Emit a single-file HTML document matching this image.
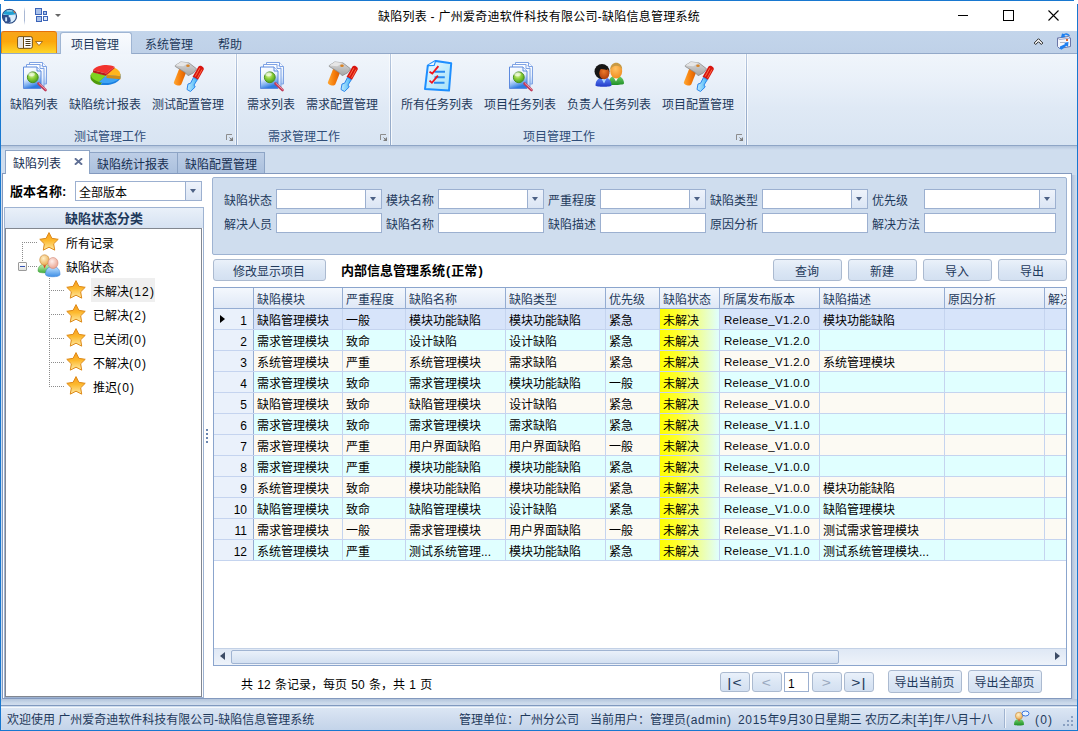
<!DOCTYPE html>
<html lang="zh-CN"><head><meta charset="utf-8"><title>缺陷列表 - 广州爱奇迪软件科技有限公司-缺陷信息管理系统</title>
<style>
*{box-sizing:border-box;margin:0;padding:0}
html,body{width:1078px;height:731px;overflow:hidden}
body{position:relative;background:#cfddee;font:12px/14px "Liberation Sans","Noto Sans CJK SC",sans-serif;color:#172f52;-webkit-font-smoothing:antialiased}
.a{position:absolute}
.t{position:absolute;white-space:nowrap;height:14px;line-height:14px}
/* window frame */
#frame{position:absolute;left:0;top:0;width:1078px;height:731px;border:1px solid #1878d0;pointer-events:none;z-index:50}
#title{position:absolute;left:1px;top:1px;width:1076px;height:30px;background:#fff}
#title .cap{position:absolute;left:0;width:1076px;top:9px;letter-spacing:.25px;text-align:center;color:#000;height:14px;line-height:14px}
/* ribbon */
#tabrow{position:absolute;left:1px;top:31px;width:1076px;height:22px;z-index:2;background:linear-gradient(#c3d5eb,#bfd1e8)}
#appbtn{position:absolute;left:0;top:0;width:56px;height:22px;border:1px solid #e8860f;border-bottom:none;border-top-color:#e4700a;border-radius:3px 3px 0 0;background:linear-gradient(#f7a51b 0%,#fba70c 45%,#fcc41f 80%,#fdd62b 100%)}
.rtab{position:absolute;top:7px;height:14px;line-height:14px;color:#1e395b;white-space:nowrap}
#rtab1{position:absolute;left:59px;top:1px;width:72px;height:22px;border:1px solid #9fb5d3;border-bottom:none;border-radius:3px 3px 0 0;background:linear-gradient(#f9fbfe,#eff4fb)}
#ribbon{position:absolute;left:1px;top:53px;width:1076px;height:93px;background:linear-gradient(#f0f5fb 0%,#e9f0f9 30%,#dfe9f5 60%,#d8e4f2 100%);border-bottom:1px solid #8ea5c6;border-top:1px solid #93a9c9}
.gsep{position:absolute;top:3px;width:1px;height:91px;background:linear-gradient(#b9c9e0,#9db1ce 40%,#93a9c8)}
.gsep:after{content:"";position:absolute;left:1px;top:0;width:1px;height:91px;background:rgba(255,255,255,.75)}.gsep:before{content:"";position:absolute;left:-1px;top:0;width:1px;height:91px;background:rgba(255,255,255,.55)}
.rb{position:absolute;top:98px;height:14px;line-height:14px;white-space:nowrap;color:#1e395b}
.gcap{position:absolute;top:130px;height:14px;line-height:14px;white-space:nowrap;color:#2f4d78}
.launch{position:absolute;top:134px;width:7px;height:7px}
/* doc tabs */
.dtab{position:absolute;top:152px;height:21px;border:1px solid #8da4c5;border-bottom:none;background:linear-gradient(#bdcee6,#abc0dd);color:#172f52}
.dtab span{position:absolute;top:5px;left:7px;white-space:nowrap;height:14px;line-height:14px}
#dtab1{top:150px;height:24px;background:#fff;z-index:3}
#dtab1 span{top:6px}
#page{position:absolute;left:2px;top:173px;width:1070px;height:526px;background:#fff;border:1px solid #8399be}
/* inputs */
.inp{position:absolute;height:20px;background:#fff;border:1px solid #9cb0d0}
.cbtn{position:absolute;right:0px;top:0px;width:16px;height:18px;border-left:1px solid #9cb0d0;background:linear-gradient(#eef3fb,#dbe5f4)}
.cbtn:after{content:"";position:absolute;left:4px;top:7px;border:3.5px solid transparent;border-top:4px solid #4d6185;border-bottom:none}
.lbl{position:absolute;height:14px;line-height:14px;white-space:nowrap;color:#1e395b}
.btn{position:absolute;text-indent:-1px;border:1px solid #abbad0;border-radius:3px;background:linear-gradient(#eaf1fa 0%,#dce7f5 50%,#d3e0f1 100%);color:#1e395b;text-align:center;white-space:nowrap}
/* grid */
#grid{position:absolute;left:213px;top:287px;width:854px;height:379px;border:1px solid #8ba5cd;background:#fff}
.gh{position:absolute;height:21px;background:linear-gradient(#f4f8fd,#dfe8f6);border-bottom:1px solid #94acd2}
.ghc{position:absolute;top:288px;height:20px;border-right:1px solid #94acd2;color:#1e395b;overflow:hidden}
.ghc span{position:absolute;left:3px;top:5px;height:14px;line-height:14px;white-space:nowrap}
.gr{position:absolute;left:214px;width:852px;height:21px;border-bottom:1px solid #c5d4ef;color:#000;overflow:hidden}
.gr.sel{background:#d7e4fa}
.gr.ev{background:#e0ffff}
.gr.od{background:#fcfaf3}
.gr .ind{position:absolute;left:0;top:0;width:40px;height:21px;background:#eaf1fb;border-right:1px solid #94acd2;border-bottom:1px solid #94acd2;color:#000}
.gr .ind span{position:absolute;right:6px;top:5px;height:14px;line-height:14px}
.gr .ind i{position:absolute;left:6px;top:6px;border:4px solid transparent;border-left:5px solid #000;border-right:none}
.gr .c{position:absolute;top:0;height:20px;border-right:1px solid #c5d4ef;padding:5px 0 0 3px;line-height:14px;white-space:nowrap;overflow:hidden}
.gr .c.st{background:linear-gradient(90deg,#ffff00 0%,#ffff30 30%,#e0ffff 100%)}
/* status bar */
#status{position:absolute;left:1px;top:705px;width:1076px;height:25px;background:linear-gradient(#f4f8fc 0,#f4f8fc 1px,#dbe6f4 1px,#cfdcee 50%,#c2d3e9 100%) 0 1px/100% 24px no-repeat;border-top:1px solid #8099bf;border-radius:0 0 4px 4px}
#pshadow{position:absolute;left:1px;top:699px;width:1076px;height:6px;background:linear-gradient(#b3c4db,#c9d8ea 60%,#d1deee)}
#status .t{top:7px;color:#1e395b}
#rshadow{position:absolute;left:1px;top:146px;width:1076px;height:4px;background:linear-gradient(#b4c5dc,#cfddee)}
#grp{position:absolute;left:4px;top:207px;width:200px;height:491px;border:1px solid #9eb3d2;background:#fff}
#grph{position:absolute;left:0;top:0;width:198px;height:20px;background:linear-gradient(#e9f0f9,#d6e2f2);text-align:center;font-weight:bold;color:#1e395b;line-height:14px;padding-top:4px;font-size:13px}
#tree{position:absolute;left:0px;top:20px;width:197px;height:469px;border:1px solid #828790;background:#fff}
.dot{position:absolute;left:206px;width:2px;height:2px;background:#6b87b0}
#filter{position:absolute;left:212px;top:177px;width:855px;height:78px;border:1px solid #9eb3d2;border-radius:2px;background:#cfddee}
.dtab .x{position:absolute;left:68px;top:5px;font-size:11px;line-height:14px;color:#44546a;font-weight:bold}
#hscroll{position:absolute;left:214px;top:648px;width:852px;height:17px;background:linear-gradient(#dfe8f5,#eef3fa);border-top:1px solid #c3d1e6}
#hthumb{position:absolute;left:17px;top:1px;width:608px;height:14px;border:1px solid #a0b4d2;border-radius:2px;background:linear-gradient(#eaf1fa,#d3e0f1)}
#hscroll i{position:absolute;top:3px;border:4.5px solid transparent}
#hscroll i.al{left:6px;border-right:5px solid #3c4c66;border-left:none}
#hscroll i.ar{right:6px;border-left:5px solid #3c4c66;border-right:none}
.btn.pg{font-size:12px;letter-spacing:1px;text-indent:0;transform:none}.btn.pg span{display:inline-block;transform:scale(1.3,1);position:relative;top:-1px}
.btn.dis{color:#9aa9c0}
.dh{position:absolute;height:1px;background:repeating-linear-gradient(90deg,#8c8c8c 0 1px,transparent 1px 2px)}
.dv{position:absolute;width:1px;background:repeating-linear-gradient(180deg,#8c8c8c 0 1px,transparent 1px 2px)}
.exp{position:absolute;left:18px;top:262px;width:9px;height:9px;border:1px solid #9a9a9a;border-radius:1px;background:linear-gradient(#fff,#e4e4e4)}
.exp i{position:absolute;left:1px;top:3px;width:5px;height:1px;background:#3553b0}
b{font-size:13px;font-weight:bold}
.l{letter-spacing:.7px}
.l2{letter-spacing:1.2px}
.pr{font-style:normal;margin:0 1px}
.cw{position:absolute;background:#fff;z-index:60}
#rsh{position:absolute;left:1072px;top:175px;width:5px;height:526px;background:linear-gradient(90deg,#b1c2da,#c6d5e8 60%,#cfddee)}
.rel{position:relative;top:-1px;left:1px;font-size:11.500px;letter-spacing:.3px}

</style></head><body>
<div id="title">
  <div class="cap">缺陷列表 - 广州爱奇迪软件科技有限公司-缺陷信息管理系统</div>
  <svg class="a" style="left:1px;top:7px" width="17" height="17" viewBox="0 0 17 17"><ellipse cx="7.500" cy="8.300" rx="7" ry="6.900" fill="#c6e3fb" stroke="#2b4a80" stroke-width="1.200"/><path d="M1.300 6.300C2 .6 13 .6 13.700 6.300 10 7.400 5 7.400 1.300 6.300z" fill="#1f9fd2"/><ellipse cx="7.500" cy="2.900" rx="3.200" ry=".7" fill="#fff" opacity=".65"/><path d="M.9 7h5.800v2.300h2v4.200l-2.800 1.700H3.200L.9 11.500z" fill="#2f4f8c"/><rect x="3.200" y="9.300" width="1.900" height="4" fill="#cfe8fc"/><path d="M7 7.500h6.500c-.3 3-1.500 5.500-4 6.800z" fill="#e4f2fe" opacity=".7"/><path d="M11 3l2.200 .7-.4 1.700z" fill="#f0641e"/></svg>
<div class="a" style="left:23px;top:6px;width:1px;height:18px;background:linear-gradient(rgba(160,176,208,0),#a9b8d4 25%,#a9b8d4 75%,rgba(160,176,208,0))"></div>
<svg class="a" style="left:34px;top:7px" width="14" height="15" viewBox="0 0 14 15"><rect x=".5" y=".5" width="6" height="6" fill="#a9c1ea" stroke="#3b64b8"/><rect x="8.500" y="3.500" width="3" height="3" fill="#a9c1ea" stroke="#3b64b8"/><rect x="1.500" y="8.500" width="5" height="5" fill="#a9c1ea" stroke="#3b64b8"/><rect x="8.500" y="8.500" width="4" height="4" fill="#dfe9fa" stroke="#3b64b8"/></svg>
<svg class="a" style="left:54px;top:13px" width="6" height="3" viewBox="0 0 6 3"><path d="M0 0h6L3 3z" fill="#666"/></svg>
<svg class="a" style="left:956px;top:9px" width="12" height="12" viewBox="0 0 12 12"><path d="M1 5.500h10" stroke="#000" stroke-width="1"/></svg>
<svg class="a" style="left:1002px;top:9px" width="12" height="12" viewBox="0 0 12 12"><rect x=".5" y=".5" width="10" height="10" fill="none" stroke="#000" stroke-width="1"/></svg>
<svg class="a" style="left:1047px;top:9px" width="12" height="12" viewBox="0 0 12 12"><path d="M.5 .5l10 10M10.500 .5l-10 10" stroke="#000" stroke-width="1.100"/></svg>
</div>
<div id="tabrow">
  <div id="appbtn"><svg class="a" style="left:15px;top:4px" width="28" height="14" viewBox="0 0 28 14"><rect x=".7" y=".7" width="14.600" height="11.600" rx="1.500" fill="#fff" stroke="#6b4a12" stroke-width="1"/><path d="M6.500 1v11" stroke="#6b4a12" stroke-width="1"/><rect x="1.500" y="1.500" width="4.500" height="10" fill="#e4e4e4"/><path d="M8.500 3.500h5M8.500 5.500h5M8.500 7.500h5M8.500 9.500h5" stroke="#4a3a1a" stroke-width="1"/><path d="M18.500 5.500h7l-3.500 4z" fill="#fff" stroke="#8a5a10" stroke-width=".8"/></svg></div>
  <div id="rtab1"></div>
  <div class="rtab" style="left:70px">项目管理</div>
  <div class="rtab" style="left:144px">系统管理</div>
  <div class="rtab" style="left:217px">帮助</div>
  <svg class="a" style="left:1032px;top:6px" width="11" height="9" viewBox="0 0 11 9"><path d="M1.200 6l4.300-4.300L9.800 6 8.300 7.500 5.500 4.700 2.700 7.500z" fill="#fff" stroke="#222" stroke-width="1" stroke-linejoin="round"/></svg>
<svg class="a" style="left:1055px;top:2px" width="16" height="17" viewBox="0 0 16 17"><path d="M1.500 5l11-1.500 2 1.500v8.500l-11 2-2-2z" fill="#f4f6fb" stroke="#6a76a8" stroke-width="1"/><path d="M1.500 5l2 1.500 11-1.500" fill="none" stroke="#8a94c0" stroke-width=".8"/><rect x="10" y="6" width="2" height="2" fill="#e0642a"/><path d="M8 1c2-1.500 5-.5 6 2l-2-.3c-1-1-2.500-1.200-3.500-.5l1 1.800-4.500.5 1-4z" fill="#1e7ff0"/><path d="M4 13.500l-.5 2 2 1.200 5-4 1.500 1 .5-4.700-4.500.7 1.200 1.300z" fill="#1e7ff0"/><path d="M4 9.500h5" stroke="#b0b4c4" stroke-width="1"/></svg>
</div>
<div id="ribbon"></div>
<div class="gsep" style="left:236px;top:54px"></div>
<div class="gsep" style="left:390px;top:54px"></div>
<div class="gsep" style="left:746px;top:54px"></div>
<svg width="0" height="0" style="position:absolute"><defs>
<linearGradient id="pg" x1="0" y1="0" x2="0" y2="1"><stop offset="0" stop-color="#ffffff"/><stop offset=".6" stop-color="#e6f0fd"/><stop offset="1" stop-color="#a9c9f5"/></linearGradient>
<linearGradient id="pgf" x1="0" y1="0" x2="0.3" y2="1"><stop offset="0" stop-color="#ffffff"/><stop offset=".55" stop-color="#e6f0fd"/><stop offset=".82" stop-color="#7fb0f0"/><stop offset="1" stop-color="#2f7be0"/></linearGradient>
<radialGradient id="lens" cx=".4" cy=".3" r=".75"><stop offset="0" stop-color="#e4f7b4"/><stop offset=".45" stop-color="#8fd13c"/><stop offset="1" stop-color="#3f9a16"/></radialGradient>
<linearGradient id="hnd" x1="0" y1="0" x2="1" y2="0"><stop offset="0" stop-color="#ffa733"/><stop offset=".5" stop-color="#f57c0a"/><stop offset="1" stop-color="#d95a00"/></linearGradient>
<linearGradient id="hmr" x1="0" y1="0" x2="0" y2="1"><stop offset="0" stop-color="#d9d9d9"/><stop offset="1" stop-color="#a4a4a4"/></linearGradient>
<linearGradient id="shaft" x1="0" y1="0" x2="1" y2="0"><stop offset="0" stop-color="#bfeaff"/><stop offset="1" stop-color="#45b4f5"/></linearGradient>
<linearGradient id="star" x1="0" y1="0" x2="0" y2="1"><stop offset="0" stop-color="#f79a1c"/><stop offset=".45" stop-color="#fdb92e"/><stop offset="1" stop-color="#feeaa6"/></linearGradient>
<linearGradient id="chk" x1="0" y1="0" x2="1" y2="1"><stop offset="0" stop-color="#f4fcff"/><stop offset=".5" stop-color="#c4ecfc"/><stop offset="1" stop-color="#a5e0f8"/></linearGradient>
<radialGradient id="faceA" cx=".45" cy=".35" r=".7"><stop offset="0" stop-color="#ee7a2a"/><stop offset="1" stop-color="#a9380a"/></radialGradient>
<radialGradient id="faceB" cx=".45" cy=".35" r=".7"><stop offset="0" stop-color="#ffc364"/><stop offset="1" stop-color="#f08a1c"/></radialGradient>
<linearGradient id="bodyA" x1="0" y1="0" x2="0" y2="1"><stop offset="0" stop-color="#5f86f5"/><stop offset="1" stop-color="#2139c8"/></linearGradient>
<linearGradient id="bodyB" x1="0" y1="0" x2="0" y2="1"><stop offset="0" stop-color="#6fd06a"/><stop offset="1" stop-color="#1f8f25"/></linearGradient>
<linearGradient id="bodyG" x1="0" y1="0" x2="0" y2="1"><stop offset="0" stop-color="#c9f0b8"/><stop offset="1" stop-color="#3fae3a"/></linearGradient>
<radialGradient id="faceC" cx=".4" cy=".35" r=".7"><stop offset="0" stop-color="#fff0c8"/><stop offset="1" stop-color="#e9a84c"/></radialGradient>
<radialGradient id="faceD" cx=".4" cy=".35" r=".7"><stop offset="0" stop-color="#fff0ec"/><stop offset="1" stop-color="#e9a08c"/></radialGradient>
<linearGradient id="bodyD" x1="0" y1="0" x2="0" y2="1"><stop offset="0" stop-color="#bfe2ff"/><stop offset="1" stop-color="#3d8ee6"/></linearGradient>
</defs></svg><svg class="a" style="left:18px;top:60px" width="32" height="32" viewBox="0 0 32 32"><path d="M11.500 2.500h13l4 4v17.500h-17z" fill="url(#pg)" stroke="#7fa3e4" stroke-width="1"/> <path d="M24.500 2.500v4h4" fill="#f4f8ff" stroke="#7fa3e4" stroke-width="1"/> <path d="M8.500 4.500h13.500l4 4v18.500h-17.500z" fill="url(#pg)" stroke="#7fa3e4" stroke-width="1"/> <path d="M22 4.500v4h4" fill="#f4f8ff" stroke="#7fa3e4" stroke-width="1"/> <path d="M5.500 7h13.500l4 4v17.500h-17.500z" fill="url(#pgf)" stroke="#5d8ade" stroke-width="1"/> <path d="M19 7v4h4" fill="#eef5ff" stroke="#5d8ade" stroke-width="1"/> <path d="M20.500 23.500l7 6.500" stroke="#c03a58" stroke-width="2.600" stroke-linecap="round"/> <path d="M21 23.300l6.500 6" stroke="#ef9aa8" stroke-width="1" stroke-linecap="round"/> <circle cx="14.800" cy="17.300" r="5.400" fill="url(#lens)" stroke="#4a8f22" stroke-width="1"/> <ellipse cx="13.500" cy="14.300" rx="3.200" ry="2" fill="#fff" opacity=".55"/></svg><svg class="a" style="left:89px;top:60px" width="32" height="32" viewBox="0 0 32 32"><g transform="translate(.5 1.900) scale(1 .89)"> <path d="M1 14.500v3.500c0 3 5 7.500 10 8l6-9z" fill="#4f9a0c"/> <path d="M31 13.500v4.500c-1 4-8 8-15 8h-5l6-9z" fill="#1b7fe0"/> <path d="M17 15L3 11.500C0 14 1 19 9.500 22.500z" fill="#7ed321"/> <path d="M17 15L9.500 22.500c5 2 13 1.500 18-2 2.500-1.800 3.500-3.500 3.500-5.500z" fill="#3fa4f4"/> <path d="M17 14.500l14 1.500c.5-4-2-7.500-6-9.500z" fill="#ffb51e"/> <path d="M25 6.500l-8 8 14 1.500v3" fill="none"/> <path d="M16.500 13L3.500 9.500C5 5.500 12 3.500 17 3.500c3 0 6 .8 8 2z" fill="#f2332e"/> <path d="M3.500 9.500l13 3.500v2.500L3.500 12z" fill="#b81c1c"/> <path d="M16.500 13l8.500-7.500v1.500l-8.500 8.500z" fill="#d62222"/> <path d="M31 16v3.500l-14-1.500v-3.500z" fill="#e08a00" opacity=".9"/></g></svg><svg class="a" style="left:173px;top:60px" width="32" height="32" viewBox="0 0 32 32"><path d="M6.500 8l7.200 3-5.300 13.300c-1.200 2.700-8.300.8-7.500-2z" fill="url(#hnd)"/> <path d="M2.300 5.500L7.800 2l8 .8 7.800 6-2.800 3.900-5.600 3-3.400-3.500-9.500-5.700z" fill="url(#hmr)" stroke="#8c8c8c" stroke-width=".8"/> <path d="M2.300 5.500L7.800 2l8 .8-5.500 3.500z" fill="#e6e6e6"/> <ellipse cx="15" cy="5.800" rx="1.800" ry="1.200" fill="#d98324"/> <path d="M25.500 6.500c1.500-2 6 .5 5.200 3L24.800 20l-5.300-3z" fill="#d8140f"/> <path d="M26.800 8.200l-4.600 8.300M29 9.500l-4.500 8.300" stroke="#ff7a4a" stroke-width=".9"/> <path d="M20.500 17.500l3.800 2.200-3.300 5.300 1.200 2-4.700 4.500-3.500-2 1-5.500 2.500-.7z" fill="url(#shaft)" stroke="#2b86ea" stroke-width="1"/></svg><svg class="a" style="left:255px;top:60px" width="32" height="32" viewBox="0 0 32 32"><path d="M11.500 2.500h13l4 4v17.500h-17z" fill="url(#pg)" stroke="#7fa3e4" stroke-width="1"/> <path d="M24.500 2.500v4h4" fill="#f4f8ff" stroke="#7fa3e4" stroke-width="1"/> <path d="M8.500 4.500h13.500l4 4v18.500h-17.500z" fill="url(#pg)" stroke="#7fa3e4" stroke-width="1"/> <path d="M22 4.500v4h4" fill="#f4f8ff" stroke="#7fa3e4" stroke-width="1"/> <path d="M5.500 7h13.500l4 4v17.500h-17.500z" fill="url(#pgf)" stroke="#5d8ade" stroke-width="1"/> <path d="M19 7v4h4" fill="#eef5ff" stroke="#5d8ade" stroke-width="1"/> <path d="M20.500 23.500l7 6.500" stroke="#c03a58" stroke-width="2.600" stroke-linecap="round"/> <path d="M21 23.300l6.500 6" stroke="#ef9aa8" stroke-width="1" stroke-linecap="round"/> <circle cx="14.800" cy="17.300" r="5.400" fill="url(#lens)" stroke="#4a8f22" stroke-width="1"/> <ellipse cx="13.500" cy="14.300" rx="3.200" ry="2" fill="#fff" opacity=".55"/></svg><svg class="a" style="left:327px;top:60px" width="32" height="32" viewBox="0 0 32 32"><path d="M6.500 8l7.200 3-5.300 13.300c-1.200 2.700-8.300.8-7.500-2z" fill="url(#hnd)"/> <path d="M2.300 5.500L7.800 2l8 .8 7.800 6-2.800 3.900-5.600 3-3.400-3.500-9.500-5.700z" fill="url(#hmr)" stroke="#8c8c8c" stroke-width=".8"/> <path d="M2.300 5.500L7.800 2l8 .8-5.500 3.500z" fill="#e6e6e6"/> <ellipse cx="15" cy="5.800" rx="1.800" ry="1.200" fill="#d98324"/> <path d="M25.500 6.500c1.500-2 6 .5 5.200 3L24.800 20l-5.300-3z" fill="#d8140f"/> <path d="M26.800 8.200l-4.600 8.300M29 9.500l-4.500 8.300" stroke="#ff7a4a" stroke-width=".9"/> <path d="M20.500 17.500l3.800 2.200-3.300 5.300 1.200 2-4.700 4.500-3.500-2 1-5.500 2.500-.7z" fill="url(#shaft)" stroke="#2b86ea" stroke-width="1"/></svg><svg class="a" style="left:421px;top:60px" width="32" height="32" viewBox="0 0 32 32"><path d="M6.800 5.600L14.600 .9l15.600 2.400-2.200 27.300L4 29z" fill="url(#chk)" stroke="#1e8fff" stroke-width="2" stroke-linejoin="round"/> <path d="M6.800 5.600l6.400-.2 1.400-4.500" fill="#eefaff" stroke="#1e8fff" stroke-width="1.200" stroke-linejoin="round"/> <path d="M13.500 11.700h10.500M13.500 17.300h10.300M13 22.800h10.500" stroke="#2a8cf0" stroke-width="2"/> <path d="M8.500 11.700l2.800 1.900 6.100-7.500" fill="none" stroke="#f0141e" stroke-width="1.800"/> <path d="M8.500 20.600l2.400 2.200 6-7.200" fill="none" stroke="#f0141e" stroke-width="1.800"/></svg><svg class="a" style="left:504px;top:60px" width="32" height="32" viewBox="0 0 32 32"><path d="M11.500 2.500h13l4 4v17.500h-17z" fill="url(#pg)" stroke="#7fa3e4" stroke-width="1"/> <path d="M24.500 2.500v4h4" fill="#f4f8ff" stroke="#7fa3e4" stroke-width="1"/> <path d="M8.500 4.500h13.500l4 4v18.500h-17.500z" fill="url(#pg)" stroke="#7fa3e4" stroke-width="1"/> <path d="M22 4.500v4h4" fill="#f4f8ff" stroke="#7fa3e4" stroke-width="1"/> <path d="M5.500 7h13.500l4 4v17.500h-17.500z" fill="url(#pgf)" stroke="#5d8ade" stroke-width="1"/> <path d="M19 7v4h4" fill="#eef5ff" stroke="#5d8ade" stroke-width="1"/> <path d="M20.500 23.500l7 6.500" stroke="#c03a58" stroke-width="2.600" stroke-linecap="round"/> <path d="M21 23.300l6.500 6" stroke="#ef9aa8" stroke-width="1" stroke-linecap="round"/> <circle cx="14.800" cy="17.300" r="5.400" fill="url(#lens)" stroke="#4a8f22" stroke-width="1"/> <ellipse cx="13.500" cy="14.300" rx="3.200" ry="2" fill="#fff" opacity=".55"/></svg><svg class="a" style="left:593px;top:60px" width="32" height="32" viewBox="0 0 32 32"><path d="M15.500 24c0-4.500 2-7 5-8h5c3.500 1 5.500 4 5.500 7.500 0 1.600-15.500 2.200-15.500 .5z" fill="url(#bodyB)"/> <path d="M20.200 16.500l2.800 5 2.800-5z" fill="#fff"/> <ellipse cx="23.200" cy="11" rx="6" ry="7.400" fill="url(#faceB)"/> <path d="M17.200 10c0-5 3-7.200 6-7.200s6 2.200 6 6.700c-1.500-3-3.500-3.800-6-3.800s-4.500 1.300-6 4.300z" fill="#c89a44"/> <path d="M2.500 25.500c0-4.500 2.500-7 5.500-8h5c3.500 1 5.500 4 5.500 8 0 1.700-16 1.700-16 0z" fill="url(#bodyA)"/> <path d="M8.200 18l2.800 5.500 2.800-5.500z" fill="#a9d4ff"/> <circle cx="9" cy="11.500" r="7.500" fill="#161616"/> <ellipse cx="11.300" cy="13.300" rx="5" ry="6" fill="url(#faceA)"/> <path d="M6 9c2-3 6-4 9-2 .5 1.500-.5 3-1.500 3-2-1-5-.5-7.500-1z" fill="#161616"/></svg><svg class="a" style="left:683px;top:60px" width="32" height="32" viewBox="0 0 32 32"><path d="M6.500 8l7.200 3-5.300 13.300c-1.200 2.700-8.300.8-7.500-2z" fill="url(#hnd)"/> <path d="M2.300 5.500L7.800 2l8 .8 7.800 6-2.800 3.900-5.600 3-3.400-3.500-9.500-5.700z" fill="url(#hmr)" stroke="#8c8c8c" stroke-width=".8"/> <path d="M2.300 5.500L7.800 2l8 .8-5.500 3.500z" fill="#e6e6e6"/> <ellipse cx="15" cy="5.800" rx="1.800" ry="1.200" fill="#d98324"/> <path d="M25.500 6.500c1.500-2 6 .5 5.200 3L24.800 20l-5.300-3z" fill="#d8140f"/> <path d="M26.800 8.200l-4.600 8.300M29 9.500l-4.500 8.300" stroke="#ff7a4a" stroke-width=".9"/> <path d="M20.500 17.500l3.800 2.200-3.300 5.300 1.200 2-4.700 4.500-3.500-2 1-5.500 2.500-.7z" fill="url(#shaft)" stroke="#2b86ea" stroke-width="1"/></svg>
<div class="rb" style="left:10px">缺陷列表</div>
<div class="rb" style="left:69px">缺陷统计报表</div>
<div class="rb" style="left:152px">测试配置管理</div>
<div class="rb" style="left:247px">需求列表</div>
<div class="rb" style="left:306px">需求配置管理</div>
<div class="rb" style="left:401px">所有任务列表</div>
<div class="rb" style="left:484px">项目任务列表</div>
<div class="rb" style="left:567px">负责人任务列表</div>
<div class="rb" style="left:662px">项目配置管理</div>
<div class="gcap" style="left:74px">测试管理工作</div>
<div class="gcap" style="left:268px">需求管理工作</div>
<div class="gcap" style="left:523px">项目管理工作</div>
<svg class="a" style="left:226px;top:134px" width="8" height="8" viewBox="0 0 8 8"><path d="M.5 6V.5H6" fill="none" stroke="#8d8d8d" stroke-width="1"/><path d="M7 3v4H3z" fill="#7d7d7d"/><path d="M3.500 3.500l2 2" stroke="#7d7d7d" stroke-width="1"/></svg><svg class="a" style="left:380px;top:134px" width="8" height="8" viewBox="0 0 8 8"><path d="M.5 6V.5H6" fill="none" stroke="#8d8d8d" stroke-width="1"/><path d="M7 3v4H3z" fill="#7d7d7d"/><path d="M3.500 3.500l2 2" stroke="#7d7d7d" stroke-width="1"/></svg><svg class="a" style="left:736px;top:134px" width="8" height="8" viewBox="0 0 8 8"><path d="M.5 6V.5H6" fill="none" stroke="#8d8d8d" stroke-width="1"/><path d="M7 3v4H3z" fill="#7d7d7d"/><path d="M3.500 3.500l2 2" stroke="#7d7d7d" stroke-width="1"/></svg>
<div id="rshadow"></div>

<div id="page"></div>
<div class="dtab" id="dtab1" style="left:5px;width:85px"><span>缺陷列表</span><svg class="a" style="left:68px;top:7px" width="9" height="7" viewBox="0 0 9 7"><path d="M.9 .3l7.200 6.400M8.100 .3L.9 6.700" stroke="#5f6f94" stroke-width="1.900" fill="none"/></svg></div>
<div class="dtab" style="left:89px;width:89px"><span>缺陷统计报表</span></div>
<div class="dtab" style="left:177px;width:88px"><span>缺陷配置管理</span></div>

<!-- left panel -->
<div class="lbl" style="left:10px;top:185px;color:#000" id="vlab"><b>版本名称:</b></div>
<div class="inp" style="left:75px;top:181px;width:127px"><div class="lbl" style="left:3px;top:4px;color:#000">全部版本</div><div class="cbtn"></div></div>
<div id="grp"><div id="grph">缺陷状态分类</div><div id="tree"></div></div>
<div class="dv" style="left:22px;top:242px;height:20px"></div><div class="dh" style="left:22px;top:242px;width:16px"></div><div class="dh" style="left:28px;top:266px;width:9px"></div><div class="exp"><i></i></div><svg class="a" style="left:39px;top:232px" width="20" height="19" viewBox="0 0 20 19"><path d="M10.00 0.60 L12.88 6.34 L19.23 7.30 L14.66 11.81 L15.70 18.15 L10.00 15.20 L4.30 18.15 L5.34 11.81 L0.77 7.30 L7.12 6.34z" fill="url(#star)" stroke="#dd8a1a" stroke-width="1" stroke-linejoin="round"/></svg><div class="lbl" style="left:66px;top:237px;color:#000">所有记录</div><svg class="a" style="left:37px;top:254px" width="25" height="24" viewBox="0 0 25 24"><path d="M1 17c0-4 2-6 4.500-6.500h4c2.500.5 4.500 2.500 4.500 6.500 0 2.500-13 2.500-13 0z" fill="url(#bodyG)" stroke="#3f9a3a" stroke-width=".5"/><path d="M6 10.500l1.600 4 1.600-4z" fill="#e03a2a"/><ellipse cx="7.500" cy="6" rx="4.800" ry="5.200" fill="url(#faceC)" stroke="#c98a3a" stroke-width=".6"/><path d="M8.500 20.500c0-4.500 2-7 5-7.500h4.500c3 .5 5 3 5 7.500 0 3-14.500 3-14.500 0z" fill="url(#bodyD)" stroke="#3f86dc" stroke-width=".6"/><ellipse cx="16" cy="9" rx="5" ry="5.500" fill="url(#faceD)" stroke="#d48a78" stroke-width=".6"/></svg><div class="lbl" style="left:66px;top:261px;color:#000">缺陷状态</div><div class="dv" style="left:49px;top:278px;height:110px"></div><div class="a" style="left:91px;top:278px;width:64px;height:24px;background:#efefef"></div><div class="dh" style="left:49px;top:290px;width:16px"></div><svg class="a" style="left:66px;top:280px" width="20" height="19" viewBox="0 0 20 19"><path d="M10.00 0.60 L12.88 6.34 L19.23 7.30 L14.66 11.81 L15.70 18.15 L10.00 15.20 L4.30 18.15 L5.34 11.81 L0.77 7.30 L7.12 6.34z" fill="url(#star)" stroke="#dd8a1a" stroke-width="1" stroke-linejoin="round"/></svg><div class="lbl" style="left:93px;top:285px;color:#000">未解决<span class="l2">(12)</span></div><div class="dh" style="left:49px;top:314px;width:16px"></div><svg class="a" style="left:66px;top:304px" width="20" height="19" viewBox="0 0 20 19"><path d="M10.00 0.60 L12.88 6.34 L19.23 7.30 L14.66 11.81 L15.70 18.15 L10.00 15.20 L4.30 18.15 L5.34 11.81 L0.77 7.30 L7.12 6.34z" fill="url(#star)" stroke="#dd8a1a" stroke-width="1" stroke-linejoin="round"/></svg><div class="lbl" style="left:93px;top:309px;color:#000">已解决<span class="l2">(2)</span></div><div class="dh" style="left:49px;top:338px;width:16px"></div><svg class="a" style="left:66px;top:328px" width="20" height="19" viewBox="0 0 20 19"><path d="M10.00 0.60 L12.88 6.34 L19.23 7.30 L14.66 11.81 L15.70 18.15 L10.00 15.20 L4.30 18.15 L5.34 11.81 L0.77 7.30 L7.12 6.34z" fill="url(#star)" stroke="#dd8a1a" stroke-width="1" stroke-linejoin="round"/></svg><div class="lbl" style="left:93px;top:333px;color:#000">已关闭<span class="l2">(0)</span></div><div class="dh" style="left:49px;top:362px;width:16px"></div><svg class="a" style="left:66px;top:352px" width="20" height="19" viewBox="0 0 20 19"><path d="M10.00 0.60 L12.88 6.34 L19.23 7.30 L14.66 11.81 L15.70 18.15 L10.00 15.20 L4.30 18.15 L5.34 11.81 L0.77 7.30 L7.12 6.34z" fill="url(#star)" stroke="#dd8a1a" stroke-width="1" stroke-linejoin="round"/></svg><div class="lbl" style="left:93px;top:357px;color:#000">不解决<span class="l2">(0)</span></div><div class="dh" style="left:49px;top:386px;width:16px"></div><svg class="a" style="left:66px;top:376px" width="20" height="19" viewBox="0 0 20 19"><path d="M10.00 0.60 L12.88 6.34 L19.23 7.30 L14.66 11.81 L15.70 18.15 L10.00 15.20 L4.30 18.15 L5.34 11.81 L0.77 7.30 L7.12 6.34z" fill="url(#star)" stroke="#dd8a1a" stroke-width="1" stroke-linejoin="round"/></svg><div class="lbl" style="left:93px;top:381px;color:#000">推迟<span class="l2">(0)</span></div>

<!-- splitter dots -->
<div class="dot" style="top:429px"></div><div class="dot" style="top:433px"></div><div class="dot" style="top:437px"></div><div class="dot" style="top:441px"></div>

<!-- filter panel -->
<div id="filter"></div>
<div class="lbl" style="left:224px;top:194px">缺陷状态</div><div class="inp" style="left:276px;top:189px;width:106px"><div class="cbtn"></div></div>
<div class="lbl" style="left:386px;top:194px">模块名称</div><div class="inp" style="left:438px;top:189px;width:106px"><div class="cbtn"></div></div>
<div class="lbl" style="left:548px;top:194px">严重程度</div><div class="inp" style="left:600px;top:189px;width:106px"><div class="cbtn"></div></div>
<div class="lbl" style="left:710px;top:194px">缺陷类型</div><div class="inp" style="left:762px;top:189px;width:106px"><div class="cbtn"></div></div>
<div class="lbl" style="left:872px;top:194px">优先级</div><div class="inp" style="left:924px;top:189px;width:132px"><div class="cbtn"></div></div>
<div class="lbl" style="left:224px;top:218px">解决人员</div><div class="inp" style="left:276px;top:213px;width:106px"></div>
<div class="lbl" style="left:386px;top:218px">缺陷名称</div><div class="inp" style="left:438px;top:213px;width:106px"></div>
<div class="lbl" style="left:548px;top:218px">缺陷描述</div><div class="inp" style="left:600px;top:213px;width:106px"></div>
<div class="lbl" style="left:710px;top:218px">原因分析</div><div class="inp" style="left:762px;top:213px;width:106px"></div>
<div class="lbl" style="left:872px;top:218px">解决方法</div><div class="inp" style="left:924px;top:213px;width:132px"></div>

<div class="btn" style="left:213px;top:259px;width:113px;height:22px;line-height:24px">修改显示项目</div>
<div class="lbl" style="left:341px;top:264px;color:#000"><b>内部信息管理系统<i class="pr">(</i>正常<i class="pr">)</i></b></div>
<div class="btn" style="left:773px;top:259px;width:69px;height:22px;line-height:24px">查询</div>
<div class="btn" style="left:848px;top:259px;width:69px;height:22px;line-height:24px">新建</div>
<div class="btn" style="left:923px;top:259px;width:69px;height:22px;line-height:24px">导入</div>
<div class="btn" style="left:998px;top:259px;width:69px;height:22px;line-height:24px">导出</div>

<!-- grid -->
<div id="grid"></div>
<div class="gh" style="left:214px;top:288px;width:852px"></div>
<div class="ghc" style="left:214px;width:40px"></div>
<div class="ghc" style="left:254px;width:89px"><span>缺陷模块</span></div>
<div class="ghc" style="left:343px;width:63px"><span>严重程度</span></div>
<div class="ghc" style="left:406px;width:100px"><span>缺陷名称</span></div>
<div class="ghc" style="left:506px;width:100px"><span>缺陷类型</span></div>
<div class="ghc" style="left:606px;width:54px"><span>优先级</span></div>
<div class="ghc" style="left:660px;width:60px"><span>缺陷状态</span></div>
<div class="ghc" style="left:720px;width:100px"><span>所属发布版本</span></div>
<div class="ghc" style="left:820px;width:125px"><span>缺陷描述</span></div>
<div class="ghc" style="left:945px;width:100px"><span>原因分析</span></div>
<div class="ghc" style="left:1045px;width:22px"><span>解决</span></div>
<div class="gr sel" style="top:309px">
<div class="ind"><i></i><span>1</span></div>
<div class="c" style="left:40px;width:89px">缺陷管理模块</div>
<div class="c" style="left:129px;width:63px">一般</div>
<div class="c" style="left:192px;width:100px">模块功能缺陷</div>
<div class="c" style="left:292px;width:100px">模块功能缺陷</div>
<div class="c" style="left:392px;width:54px">紧急</div>
<div class="c st" style="left:446px;width:60px">未解决</div>
<div class="c" style="left:506px;width:100px"><span class="rel">Release_V1.2.0</span></div>
<div class="c" style="left:606px;width:125px">模块功能缺陷</div>
<div class="c" style="left:731px;width:100px"></div>
<div class="c" style="left:831px;width:22px"></div>
</div>
<div class="gr ev" style="top:330px">
<div class="ind"><span>2</span></div>
<div class="c" style="left:40px;width:89px">需求管理模块</div>
<div class="c" style="left:129px;width:63px">致命</div>
<div class="c" style="left:192px;width:100px">设计缺陷</div>
<div class="c" style="left:292px;width:100px">设计缺陷</div>
<div class="c" style="left:392px;width:54px">紧急</div>
<div class="c st" style="left:446px;width:60px">未解决</div>
<div class="c" style="left:506px;width:100px"><span class="rel">Release_V1.2.0</span></div>
<div class="c" style="left:606px;width:125px"></div>
<div class="c" style="left:731px;width:100px"></div>
<div class="c" style="left:831px;width:22px"></div>
</div>
<div class="gr od" style="top:351px">
<div class="ind"><span>3</span></div>
<div class="c" style="left:40px;width:89px">系统管理模块</div>
<div class="c" style="left:129px;width:63px">严重</div>
<div class="c" style="left:192px;width:100px">系统管理模块</div>
<div class="c" style="left:292px;width:100px">需求缺陷</div>
<div class="c" style="left:392px;width:54px">紧急</div>
<div class="c st" style="left:446px;width:60px">未解决</div>
<div class="c" style="left:506px;width:100px"><span class="rel">Release_V1.2.0</span></div>
<div class="c" style="left:606px;width:125px">系统管理模块</div>
<div class="c" style="left:731px;width:100px"></div>
<div class="c" style="left:831px;width:22px"></div>
</div>
<div class="gr ev" style="top:372px">
<div class="ind"><span>4</span></div>
<div class="c" style="left:40px;width:89px">需求管理模块</div>
<div class="c" style="left:129px;width:63px">致命</div>
<div class="c" style="left:192px;width:100px">需求管理模块</div>
<div class="c" style="left:292px;width:100px">模块功能缺陷</div>
<div class="c" style="left:392px;width:54px">一般</div>
<div class="c st" style="left:446px;width:60px">未解决</div>
<div class="c" style="left:506px;width:100px"><span class="rel">Release_V1.0.0</span></div>
<div class="c" style="left:606px;width:125px"></div>
<div class="c" style="left:731px;width:100px"></div>
<div class="c" style="left:831px;width:22px"></div>
</div>
<div class="gr od" style="top:393px">
<div class="ind"><span>5</span></div>
<div class="c" style="left:40px;width:89px">缺陷管理模块</div>
<div class="c" style="left:129px;width:63px">致命</div>
<div class="c" style="left:192px;width:100px">缺陷管理模块</div>
<div class="c" style="left:292px;width:100px">设计缺陷</div>
<div class="c" style="left:392px;width:54px">紧急</div>
<div class="c st" style="left:446px;width:60px">未解决</div>
<div class="c" style="left:506px;width:100px"><span class="rel">Release_V1.0.0</span></div>
<div class="c" style="left:606px;width:125px"></div>
<div class="c" style="left:731px;width:100px"></div>
<div class="c" style="left:831px;width:22px"></div>
</div>
<div class="gr ev" style="top:414px">
<div class="ind"><span>6</span></div>
<div class="c" style="left:40px;width:89px">需求管理模块</div>
<div class="c" style="left:129px;width:63px">致命</div>
<div class="c" style="left:192px;width:100px">需求管理模块</div>
<div class="c" style="left:292px;width:100px">需求缺陷</div>
<div class="c" style="left:392px;width:54px">紧急</div>
<div class="c st" style="left:446px;width:60px">未解决</div>
<div class="c" style="left:506px;width:100px"><span class="rel">Release_V1.1.0</span></div>
<div class="c" style="left:606px;width:125px"></div>
<div class="c" style="left:731px;width:100px"></div>
<div class="c" style="left:831px;width:22px"></div>
</div>
<div class="gr od" style="top:435px">
<div class="ind"><span>7</span></div>
<div class="c" style="left:40px;width:89px">需求管理模块</div>
<div class="c" style="left:129px;width:63px">严重</div>
<div class="c" style="left:192px;width:100px">用户界面缺陷</div>
<div class="c" style="left:292px;width:100px">用户界面缺陷</div>
<div class="c" style="left:392px;width:54px">一般</div>
<div class="c st" style="left:446px;width:60px">未解决</div>
<div class="c" style="left:506px;width:100px"><span class="rel">Release_V1.0.0</span></div>
<div class="c" style="left:606px;width:125px"></div>
<div class="c" style="left:731px;width:100px"></div>
<div class="c" style="left:831px;width:22px"></div>
</div>
<div class="gr ev" style="top:456px">
<div class="ind"><span>8</span></div>
<div class="c" style="left:40px;width:89px">需求管理模块</div>
<div class="c" style="left:129px;width:63px">严重</div>
<div class="c" style="left:192px;width:100px">模块功能缺陷</div>
<div class="c" style="left:292px;width:100px">模块功能缺陷</div>
<div class="c" style="left:392px;width:54px">紧急</div>
<div class="c st" style="left:446px;width:60px">未解决</div>
<div class="c" style="left:506px;width:100px"><span class="rel">Release_V1.0.0</span></div>
<div class="c" style="left:606px;width:125px"></div>
<div class="c" style="left:731px;width:100px"></div>
<div class="c" style="left:831px;width:22px"></div>
</div>
<div class="gr od" style="top:477px">
<div class="ind"><span>9</span></div>
<div class="c" style="left:40px;width:89px">系统管理模块</div>
<div class="c" style="left:129px;width:63px">致命</div>
<div class="c" style="left:192px;width:100px">模块功能缺陷</div>
<div class="c" style="left:292px;width:100px">模块功能缺陷</div>
<div class="c" style="left:392px;width:54px">紧急</div>
<div class="c st" style="left:446px;width:60px">未解决</div>
<div class="c" style="left:506px;width:100px"><span class="rel">Release_V1.0.0</span></div>
<div class="c" style="left:606px;width:125px">模块功能缺陷</div>
<div class="c" style="left:731px;width:100px"></div>
<div class="c" style="left:831px;width:22px"></div>
</div>
<div class="gr ev" style="top:498px">
<div class="ind"><span>10</span></div>
<div class="c" style="left:40px;width:89px">缺陷管理模块</div>
<div class="c" style="left:129px;width:63px">致命</div>
<div class="c" style="left:192px;width:100px">缺陷管理模块</div>
<div class="c" style="left:292px;width:100px">设计缺陷</div>
<div class="c" style="left:392px;width:54px">紧急</div>
<div class="c st" style="left:446px;width:60px">未解决</div>
<div class="c" style="left:506px;width:100px"><span class="rel">Release_V1.0.0</span></div>
<div class="c" style="left:606px;width:125px">缺陷管理模块</div>
<div class="c" style="left:731px;width:100px"></div>
<div class="c" style="left:831px;width:22px"></div>
</div>
<div class="gr od" style="top:519px">
<div class="ind"><span>11</span></div>
<div class="c" style="left:40px;width:89px">需求管理模块</div>
<div class="c" style="left:129px;width:63px">一般</div>
<div class="c" style="left:192px;width:100px">需求管理模块</div>
<div class="c" style="left:292px;width:100px">用户界面缺陷</div>
<div class="c" style="left:392px;width:54px">一般</div>
<div class="c st" style="left:446px;width:60px">未解决</div>
<div class="c" style="left:506px;width:100px"><span class="rel">Release_V1.1.0</span></div>
<div class="c" style="left:606px;width:125px">测试需求管理模块</div>
<div class="c" style="left:731px;width:100px"></div>
<div class="c" style="left:831px;width:22px"></div>
</div>
<div class="gr ev" style="top:540px">
<div class="ind"><span>12</span></div>
<div class="c" style="left:40px;width:89px">系统管理模块</div>
<div class="c" style="left:129px;width:63px">严重</div>
<div class="c" style="left:192px;width:100px">测试系统管理...</div>
<div class="c" style="left:292px;width:100px">模块功能缺陷</div>
<div class="c" style="left:392px;width:54px">紧急</div>
<div class="c st" style="left:446px;width:60px">未解决</div>
<div class="c" style="left:506px;width:100px"><span class="rel">Release_V1.1.0</span></div>
<div class="c" style="left:606px;width:125px">测试系统管理模块...</div>
<div class="c" style="left:731px;width:100px"></div>
<div class="c" style="left:831px;width:22px"></div>
</div>
<!-- hscroll -->
<div id="hscroll"><div id="hthumb"></div><i class="al"></i><i class="ar"></i></div>

<!-- pager -->
<div class="lbl" style="left:241px;top:678px;color:#000;word-spacing:1px">共 12 条记录，每页 50 条，共 1 页</div>
<div class="btn pg" style="left:720px;top:672px;width:30px;height:20px;line-height:22px"><span>|&lt;</span></div>
<div class="btn pg dis" style="left:752px;top:672px;width:30px;height:20px;line-height:22px"><span>&lt;</span></div>
<div class="inp" style="left:784px;top:672px;width:25px;height:20px"><div class="lbl" style="left:3px;top:4px;color:#000">1</div></div>
<div class="btn pg dis" style="left:812px;top:672px;width:30px;height:20px;line-height:22px"><span>&gt;</span></div>
<div class="btn pg" style="left:844px;top:672px;width:30px;height:20px;line-height:22px"><span>&gt;|</span></div>
<div class="btn" style="left:888px;top:670px;width:74px;height:23px;line-height:25px">导出当前页</div>
<div class="btn" style="left:968px;top:670px;width:74px;height:23px;line-height:25px">导出全部页</div>

<div id="rsh"></div><div id="pshadow"></div>
<!-- status -->
<div id="status">
  <div class="t" style="left:6px">欢迎使用 广州爱奇迪软件科技有限公司-缺陷信息管理系统</div>
  <div class="t" style="left:458px">管理单位：广州分公司</div>
  <div class="t" style="left:589px">当前用户：管理员<span class="l">(admin)</span></div>
  <div class="t" style="left:737px"><span class="l">2015</span>年<span class="l">9</span>月<span class="l">30</span>日星期三 农历乙未<span class="l">[</span>羊<span class="l">]</span>年八月十八</div>
  <div class="t" style="left:1034px"><span class="l2">(0)</span></div>
  <div class="a" style="left:1003px;top:3px;width:1px;height:19px;background:#9fb3d0"></div><div class="a" style="left:1004px;top:3px;width:1px;height:19px;background:#eef3fa"></div>
<svg class="a" style="left:1012px;top:4px" width="17" height="16" viewBox="0 0 17 16"><path d="M1 14.500c0-3.500 1.500-5 3.500-5.300h3c2 .3 3.500 1.800 3.500 5.300 0 1.300-10 1.300-10 0z" fill="url(#bodyB)"/><path d="M5 9l1 3 1-3z" fill="#e03a2a"/><circle cx="6" cy="5.800" r="3.600" fill="url(#faceC)" stroke="#c98a3a" stroke-width=".6"/><ellipse cx="12.500" cy="3.500" rx="3.500" ry="2.500" fill="#e9f3ff" stroke="#3d78e0" stroke-width="1"/><path d="M10 5l-1 1.800 2.200-1z" fill="#3d78e0"/></svg>
<svg class="a" style="left:1062px;top:10px" width="12" height="12" viewBox="0 0 12 12"><g fill="#8aa0c2"><rect x="8" y="0" width="2" height="2"/><rect x="4" y="4" width="2" height="2"/><rect x="8" y="4" width="2" height="2"/><rect x="0" y="8" width="2" height="2"/><rect x="4" y="8" width="2" height="2"/><rect x="8" y="8" width="2" height="2"/></g></svg>
</div>
<div id="frame"></div>
<div class="cw" style="left:0;top:0;width:4px;height:1px"></div><div class="cw" style="left:0;top:0;width:1px;height:4px"></div><div class="cw" style="left:1074px;top:0;width:4px;height:1px"></div><div class="cw" style="left:1077px;top:0;width:1px;height:4px"></div>
</body></html>
